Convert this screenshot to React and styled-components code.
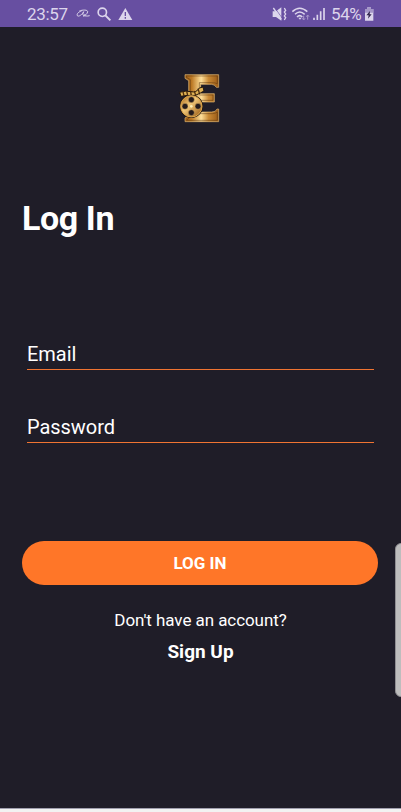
import React from "react";
import styled, { createGlobalStyle } from "styled-components";

const GlobalStyle = createGlobalStyle`
  * { box-sizing: border-box; }
  html, body { margin: 0; background: #f2f2f2; overflow: hidden; }
  button, input { font-family: inherit; }
`;

const Screen = styled.div`
  position: relative;
  width: 401px;
  height: 812px;
  display: flex;
  flex-direction: column;
  overflow: hidden;
  background: #f2f2f2;
  color: #fff;
  font-family: Roboto, sans-serif;
`;

const StatusBar = styled.header`
  height: 27px;
  flex: none;
  display: flex;
  justify-content: space-between;
  padding: 0 27px;
  background: #674fa1;
  color: #dcd5ec;
`;

const StatusGroup = styled.div`
  display: flex;
  align-items: center;
  height: 28px;
`;

const StatusText = styled.span`
  font-size: 17px;
  line-height: 28px;
  letter-spacing: ${(p) => p.$spacing}px;
  white-space: nowrap;
  width: ${(p) => p.$width}px;
`;

const Glyph = styled.svg`
  display: block;
  flex: none;
`;

const Content = styled.main`
  height: 782px;
  flex: none;
  display: flex;
  flex-direction: column;
  align-items: stretch;
  padding: 38px 22px 0;
  background: #1f1d28;
  border-bottom: 1px solid #a09fae;
`;

const Logo = styled.svg`
  width: 60px;
  height: 65px;
  margin-left: 148px;
  flex: none;
`;

const Title = styled.h1`
  margin: 68px 0 0;
  font-size: 34px;
  line-height: 40px;
  font-weight: 700;
  letter-spacing: -0.4px;
`;

const Fields = styled.div`
  display: flex;
  flex-direction: column;
  gap: 41px;
  margin: 100px 5px 0;
`;

const Field = styled.input`
  height: 32px;
  width: 347px;
  padding: 1px 0 0;
  border: 0;
  border-bottom: 1px solid #f07432;
  border-radius: 0;
  outline: 0;
  background: transparent;
  color: #fff;
  font-size: 20px;
  letter-spacing: -0.05px;
  &::placeholder { color: #fff; opacity: 1; }
`;

const SubmitButton = styled.button`
  width: 356px;
  height: 44px;
  margin: 98px 0 0;
  padding: 1px 0 0;
  border: 0;
  border-radius: 22px;
  background: #ff7628;
  color: #fff;
  font-size: 17px;
  font-weight: 700;
  line-height: 43px;
`;

const Prompt = styled.p`
  margin: 24px 0 0;
  text-align: center;
  font-size: 17px;
  line-height: 22px;
  letter-spacing: -0.07px;
`;

const SignUp = styled.a`
  margin-top: 9px;
  text-align: center;
  font-size: 19px;
  font-weight: 700;
  line-height: 24px;
`;

const EdgeHandle = styled.div`
  position: absolute;
  top: 543px;
  right: -6px;
  width: 12px;
  height: 154px;
  border-radius: 6px;
  border: 1px solid #8f8e92;
  background: #bdbdbd;
`;

const reelHoles = [[64, 104], [45, 124], [84, 124], [64, 143]];

const LeftIcons = () => (
  <Glyph width="63" height="28" viewBox="210 0 189 84" fill="none" stroke="#dcd5ec">
    <path d="M244 34C237 34 229 42 232 47C236 52 248 42 251 35C246 45 249 49 255 43M238 33C248 29 263 29 263 35C263 41 254 48 250 48C255 46 261 50 269 47" strokeWidth="3" />
    <circle cx="307" cy="37" r="12.5" strokeWidth="5" />
    <path d="M316 46L331 61" strokeWidth="6" />
    <path d="M376 24L397 60H355Z" fill="#dcd5ec" stroke="none" />
    <path d="M376 36V48M376 51V56" stroke="#674fa1" strokeWidth="4" />
  </Glyph>
);

const RightIcons = () => (
  <Glyph width="60" height="28" viewBox="33 0 180 84" fill="none" stroke="#dcd5ec">
    <path d="M38 34H48L64 22V62L48 51H38Z" fill="#dcd5ec" stroke="none" />
    <path d="M44 23L67 55" stroke="#674fa1" strokeWidth="2" />
    <path d="M40 24L64 58" strokeWidth="4" />
    <path d="M73 24L77 31L73 36L77 42L73 48L77 53L73 60" strokeWidth="4" />
    <path d="M97 35Q119 14 142 35M105 43Q119 29 134 43M111 51Q119 43 127 51" strokeWidth="4.5" />
    <path d="M115 53L120 59L125 53Z" fill="#dcd5ec" stroke="none" />
    <path d="M131 47V59M127 55L131 60L135 55M143 59V46M139 50L143 45L147 50" stroke="#aa9acc" strokeWidth="3" />
    <path d="M162 53V60M172 44V60M182 34V60M192 24V60" strokeWidth="5" />
  </Glyph>
);

const Battery = () => (
  <Glyph width="10" height="28" viewBox="313 0 30 84">
    <path d="M323 22H334V27H341V62H316V27H323Z" fill="#dcd5ec" />
    <path d="M323 22H334V27H341V38H316V27H323Z" fill="#a496c7" />
    <path d="M331 33L320 46H327L325 56L336 43H330Z" fill="#33264e" />
  </Glyph>
);

const BrandLogo = () => (
  <Logo viewBox="0 0 180 195" aria-label="E film reel">
    <defs>
      <linearGradient id="gold" x1="0" y1="0" x2="1" y2="1">
        <stop stopColor="#a66314" />
        <stop offset=".42" stopColor="#f1c879" />
        <stop offset="1" stopColor="#93530d" />
      </linearGradient>
      <linearGradient id="letter">
        <stop stopColor="#9a5c16" />
        <stop offset=".2" stopColor="#bb7824" />
        <stop offset=".48" stopColor="#ffe09a" />
        <stop offset=".7" stopColor="#c98a35" />
        <stop offset="1" stopColor="#9a5a16" />
      </linearGradient>
    </defs>
    <path d="M45 29H146V67H139Q134 58 124 58H92V86H133V111H92V141H125Q138 141 141 132H146V170H45V159L56 151V47L45 40Z" fill="url(#letter)" stroke="#e0b571" strokeWidth="2" />
    <path d="M49 33H142V56Q136 53 124 53H88V90H129V106H88V146H127Q138 145 142 141V166H50L61 154V44L49 37Z" fill="none" stroke="#593511" strokeWidth="1.5" />
    <path d="M29 82Q47 76 63 80T88 69L99 66L102 78L91 84Q76 94 62 92T33 94Z" fill="#deb052" stroke="#21160d" strokeWidth="3" />
    <path d="M39 80L42 93M50 78L53 92M62 80L64 93M73 78L77 91M84 71L88 84" stroke="#4e2c0b" strokeWidth="4" />
    <circle cx="64" cy="124" r="35" fill="#21160f" />
    <circle cx="64" cy="124" r="32" fill="url(#gold)" stroke="#dca54a" strokeWidth="3" />
    {reelHoles.map(([x, y]) => (
      <circle key={`${x}-${y}`} cx={x} cy={y} r="9" fill="#241b1b" stroke="#d9ad62" strokeWidth="1.5" />
    ))}
    <circle cx="64" cy="124" r="4" fill="#fff0b7" />
  </Logo>
);

export default function App() {
  return (
    <Screen>
      <GlobalStyle />
      <StatusBar>
        <StatusGroup>
          <StatusText $width={43} $spacing={-0.3}>23:57</StatusText>
          <LeftIcons />
        </StatusGroup>
        <StatusGroup>
          <RightIcons />
          <StatusText $width={33} $spacing={-0.4}>54%</StatusText>
          <Battery />
        </StatusGroup>
      </StatusBar>
      <Content>
        <BrandLogo />
        <Title>Log In</Title>
        <Fields>
          <Field type="email" placeholder="Email" aria-label="Email" />
          <Field type="password" placeholder="Password" aria-label="Password" />
        </Fields>
        <SubmitButton type="button">LOG IN</SubmitButton>
        <Prompt>Don't have an account?</Prompt>
        <SignUp>Sign Up</SignUp>
      </Content>
      <EdgeHandle />
    </Screen>
  );
}
